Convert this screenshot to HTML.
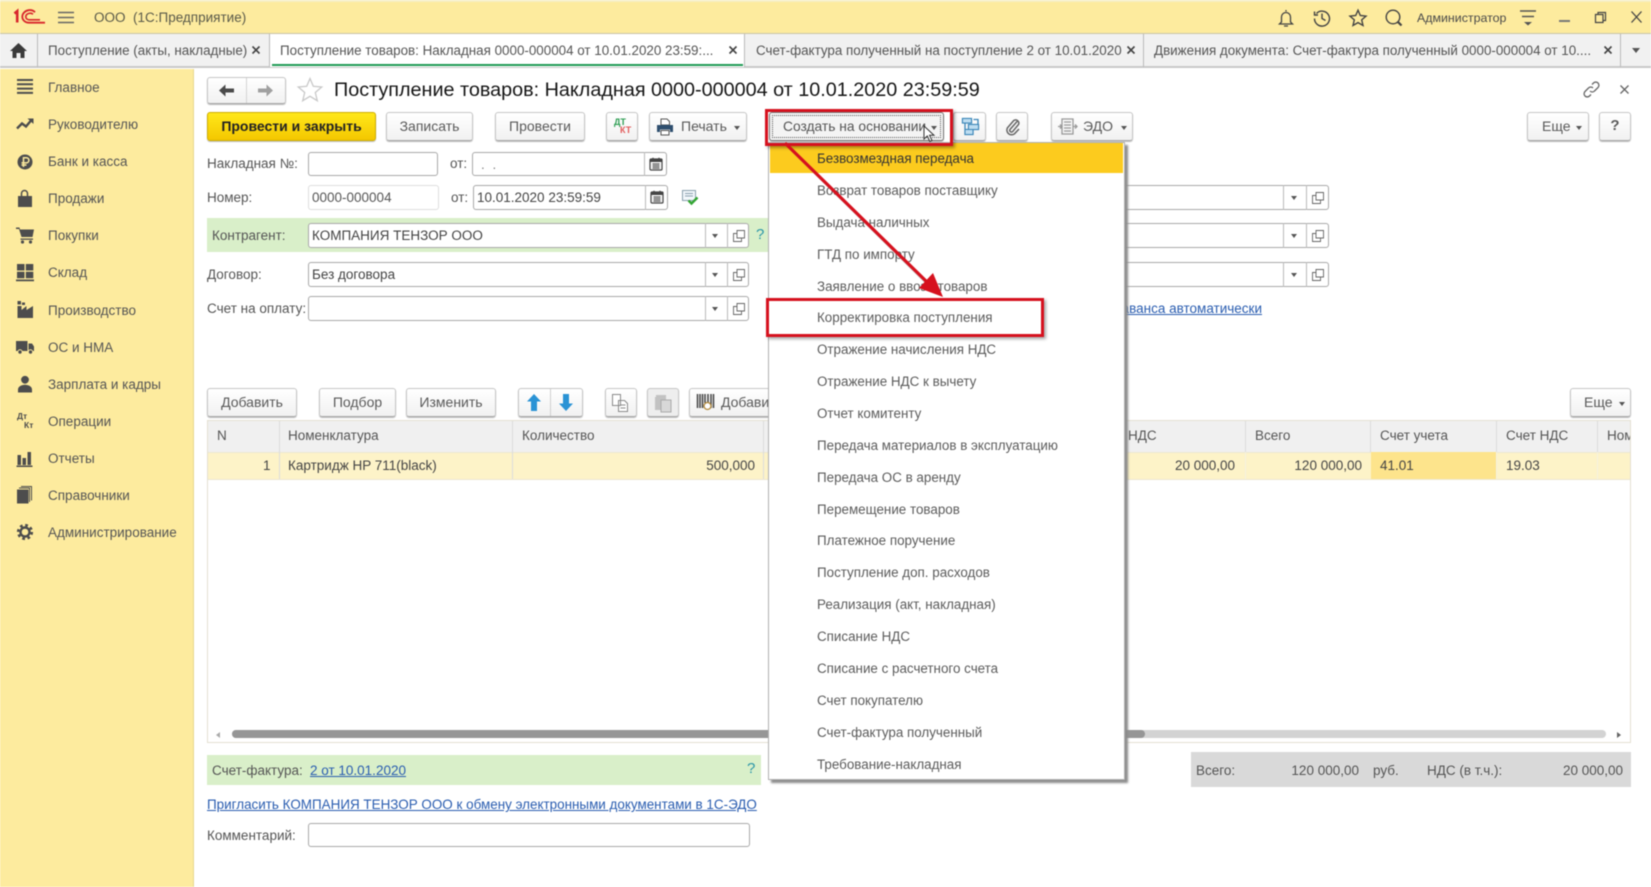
<!DOCTYPE html>
<html lang="ru"><head><meta charset="utf-8"><title>1С</title>
<style>
*{box-sizing:border-box}
html,body{margin:0;padding:0;background:#fff}
#r{position:relative;width:1651px;height:887px;overflow:hidden;font-family:"Liberation Sans",Arial,sans-serif;font-size:13.5px;color:#555;background:#fff;filter:blur(.45px)}
.a{position:absolute}
.t{position:absolute;white-space:nowrap;line-height:20px;height:20px;margin-top:1px}
.b{position:absolute;top:112px;height:29px;border:1px solid #c6c6c6;border-bottom:1px solid #a8a8a8;border-radius:3px;background:linear-gradient(#fff,#f1f1f1);box-shadow:0 1px 1px #bbb;text-align:center;line-height:26px;color:#5a5a5a;white-space:nowrap}
.i{position:absolute;background:#fff;border:1px solid #a9a9a9;border-radius:3px;height:25px;line-height:23px;padding-left:3px;color:#444}
.d{position:absolute;width:1px;background:#bbb}
.c{position:absolute;width:0;height:0;border-left:3.5px solid transparent;border-right:3.5px solid transparent;border-top:4px solid #555}
.m{position:absolute;left:817px;white-space:nowrap;line-height:20px;height:20px;color:#5c5c5c;font-size:13.4px;margin-top:1px}
.h{position:absolute;top:421px;height:31px;background:#f0f0f0}
.v{position:absolute;width:1px;background:#dcdcdc}
a,.l{color:#2a5db0;text-decoration:underline}
svg{position:absolute;overflow:visible}
</style></head><body><div id="r">
<svg width="0" height="0"><defs>
<symbol id="pop" viewBox="0 0 14 14" overflow="visible"><path d="M5 1.500h7.500v7.500h-7.500z M5 4.500h-3.500v8h8v-3.500" fill="none" stroke="#666" stroke-width=".9"/></symbol>
<symbol id="cal" viewBox="0 0 14 14" overflow="visible"><rect x="1" y="2" width="12" height="11" rx="1" fill="#fff" stroke="#444" stroke-width="1.2"/><rect x="1" y="2" width="12" height="3" fill="#444"/><path d="M4 .8v2.500M10 .8v2.500" stroke="#444" stroke-width="1.300"/><path d="M3 7h8M3 9h8M3 11h8M5 6v6M7 6v6M9 6v6" stroke="#555" stroke-width=".8"/></symbol>
</defs></svg>

<!-- header -->
<div class="a" style="left:0;top:0;width:1651px;height:33px;background:#fdeb9e"></div>
<div class="a" style="left:0;top:0;width:1651px;height:2px;background:#f6efc4"></div>
<svg style="left:13px;top:9px" width="33" height="16" viewBox="0 0 33 16"><path d="M1.500 4.500L4.200 2.200V13.500" fill="none" stroke="#d8262c" stroke-width="2.600"/><path d="M22 3.200C20.500 1.600 18 .8 15.500 1.200 12 1.800 9.300 4.500 9.300 7.800c0 3.300 3 5.900 6.600 5.900H32" fill="none" stroke="#d8262c" stroke-width="1.800"/><path d="M20 5.200C19 4.400 17.500 4 16 4.400 14 4.900 12.800 6.200 12.800 7.800c0 1.700 1.500 3 3.400 3H27" fill="none" stroke="#d8262c" stroke-width="1.600"/></svg>
<svg style="left:58px;top:11px" width="16" height="13"><path d="M0 1.500h16M0 6.500h16M0 11.500h16" stroke="#666" stroke-width="1.500"/></svg>
<div class="t" style="left:94px;top:7px;color:#5a5a4a;font-size:13.5px">ООО&nbsp; (1С:Предприятие)</div>
<svg style="left:1277px;top:9px" width="18" height="18" fill="none" stroke="#444" stroke-width="1.300"><path d="M9 1v1.500M4.500 13V8a4.500 4.500 0 0 1 9 0v5l2 2H2.500z M7 17h4"/></svg>
<svg style="left:1313px;top:9px" width="18" height="18" fill="none" stroke="#444" stroke-width="1.400"><path d="M3.500 4.500A7.500 7.500 0 1 1 1.500 9.500M1.500 2.500v3.500h3.500M9 4.500v5l3.500 2"/></svg>
<svg style="left:1349px;top:9px" width="18" height="18" fill="none" stroke="#444" stroke-width="1.400"><path d="M9 1.200 11.300 6.500 17 7.100 12.700 10.900 14 16.500 9 13.600 4 16.500 5.300 10.900 1 7.100 6.700 6.500z"/></svg>
<svg style="left:1385px;top:9px" width="18" height="18" fill="none" stroke="#444"><circle cx="8" cy="8" r="6.800" stroke-width="1.400"/><path d="M12.800 12.800 16.500 16.500" stroke-width="2.200"/></svg>
<div class="t" style="left:1417px;top:7px;font-size:12.4px;color:#4a4a4a">Администратор</div>
<svg style="left:1520px;top:10px" width="16" height="16"><path d="M0 1h16M2 6.500h12" stroke="#555" stroke-width="1.500"/><path d="M4 12h8l-4 3.500z" fill="#555"/></svg>
<div class="a" style="left:1559px;top:20px;width:11px;height:2px;background:#777"></div>
<svg style="left:1595px;top:12px" width="11" height="11" fill="none" stroke="#444" stroke-width="1.200"><path d="M.5 2.500h7.500v8h-7.500zM3 2.500V.5h7.500v8H8"/></svg>
<svg style="left:1631px;top:11px" width="11" height="12"><path d="M.5 .5 10.500 11.500M10.500 .5.500 11.500" stroke="#444" stroke-width="1.300"/></svg>

<!-- tabs -->
<div class="a" style="left:0;top:33px;width:1651px;height:35px;background:#f1f1f1;border-top:1px solid #c9c4a8;border-bottom:2px solid #c9c9c9"></div>
<svg style="left:10px;top:43px" width="17" height="15"><path d="M8.500 0 17 8h-2.500v7H10.500v-5h-4v5H2.500V8H0z" fill="#3a3a3a"/></svg>
<div class="d" style="left:37px;top:34px;height:33px"></div>
<div class="t" style="left:48px;top:40px;font-size:13.4px">Поступление (акты, накладные)</div>
<svg style="left:252px;top:46px" width="8" height="8"><path d="M.5 .5 7.500 7.500M7.500 .5.500 7.500" stroke="#444" stroke-width="1.600"/></svg>
<div class="a" style="left:269px;top:34px;width:476px;height:33px;background:#fff;border-left:1px solid #bbb;border-right:1px solid #bbb"></div>
<div class="a" style="left:272px;top:64px;width:471px;height:2px;background:#1f9a55"></div>
<div class="t" style="left:280px;top:40px;font-size:13.4px">Поступление товаров: Накладная 0000-000004 от 10.01.2020 23:59:...</div>
<svg style="left:729px;top:46px" width="8" height="8"><path d="M.5 .5 7.500 7.500M7.500 .5.500 7.500" stroke="#444" stroke-width="1.600"/></svg>
<div class="t" style="left:756px;top:40px;font-size:13.4px">Счет-фактура полученный на поступление 2 от 10.01.2020</div>
<svg style="left:1127px;top:46px" width="8" height="8"><path d="M.5 .5 7.500 7.500M7.500 .5.500 7.500" stroke="#444" stroke-width="1.600"/></svg>
<div class="d" style="left:1143px;top:34px;height:33px"></div>
<div class="t" style="left:1154px;top:40px;font-size:13.4px">Движения документа: Счет-фактура полученный 0000-000004 от 10....</div>
<svg style="left:1604px;top:46px" width="8" height="8"><path d="M.5 .5 7.500 7.500M7.500 .5.500 7.500" stroke="#444" stroke-width="1.600"/></svg>
<div class="d" style="left:1620px;top:34px;height:33px"></div>
<div class="c" style="left:1632px;top:48px;border-left-width:4.500px;border-right-width:4.500px;border-top-width:5px"></div>

<!-- sidebar -->
<div class="a" style="left:0;top:69px;width:194px;height:818px;background:#fdeb9e;border-right:1px solid #e8d98e"></div>
<div class="t" style="left:48px;top:77px">Главное</div>
<div class="t" style="left:48px;top:114px">Руководителю</div>
<div class="t" style="left:48px;top:151px">Банк и касса</div>
<div class="t" style="left:48px;top:188px">Продажи</div>
<div class="t" style="left:48px;top:225px">Покупки</div>
<div class="t" style="left:48px;top:262px">Склад</div>
<div class="t" style="left:48px;top:300px">Производство</div>
<div class="t" style="left:48px;top:337px">ОС и НМА</div>
<div class="t" style="left:48px;top:374px">Зарплата и кадры</div>
<div class="t" style="left:48px;top:411px">Операции</div>
<div class="t" style="left:48px;top:448px">Отчеты</div>
<div class="t" style="left:48px;top:485px">Справочники</div>
<div class="t" style="left:48px;top:522px">Администрирование</div>
<svg style="left:17px;top:79px" width="16" height="16" fill="#4d4d4d"><path d="M0 0h16v2H0zM0 4.300h16v2H0zM0 8.600h16v2H0zM0 12.900h16v2H0z"/></svg>
<svg style="left:16px;top:115px" width="18" height="18"><path d="M1 13.500 6 8.500 10 11.500 15 5.500" fill="none" stroke="#4d4d4d" stroke-width="2.400"/><path d="M11.500 3.500h6v5.500z" fill="#4d4d4d"/></svg>
<svg style="left:17px;top:154px" width="16" height="16"><circle cx="8" cy="8" r="7.500" fill="#4d4d4d"/><path d="M6.500 13V3.700h2.800a2.600 2.600 0 0 1 0 5.200H4.500M4.500 11h5" fill="none" stroke="#fdeb9e" stroke-width="1.500"/></svg>
<svg style="left:17px;top:190px" width="16" height="18"><path d="M1 6h14v11H1z" fill="#4d4d4d"/><path d="M4.500 8V3.500a3 3 0 0 1 6 0V8" fill="none" stroke="#4d4d4d" stroke-width="1.500"/></svg>
<svg style="left:16px;top:226px" width="18" height="18" fill="#4d4d4d"><path d="M0 1.500h3.500l.5 2h14l-1.500 7.500H5.500L3 3H0z"/><path d="M4.500 12.500h12.500v1.300H4.500z"/><circle cx="6.500" cy="16" r="1.600"/><circle cx="14.500" cy="16" r="1.600"/></svg>
<svg style="left:16px;top:264px" width="18" height="18" fill="#4d4d4d"><path d="M1 0h7.500v6.500H1zM9.800 0h7.500v6.500H9.800zM1 7.800h7.500v6.500H1zM9.800 7.800h7.500v6.500H9.800zM0 15.500h18v1.800H0z"/></svg>
<svg style="left:16px;top:301px" width="18" height="18" fill="#4d4d4d"><path d="M1.500 0H5v3.500H1.500zM6 1.500h3v2.500H6z"/><path d="M1.500 5h4v4l5-4v4l6.500-4v12H1.500z"/></svg>
<svg style="left:16px;top:338px" width="18" height="18" fill="#4d4d4d"><path d="M0 3h11.500v10H0z"/><path d="M12.500 5.500h3.500l2 3v4.500h-5.500z"/><circle cx="4" cy="14" r="2.200" stroke="#fdeb9e"/><circle cx="14.500" cy="14" r="2.200" stroke="#fdeb9e"/></svg>
<svg style="left:17px;top:375px" width="16" height="18" fill="#4d4d4d"><circle cx="8" cy="4.800" r="3.900"/><path d="M1 17.500v-3c0-3 3.500-4.800 7-4.800s7 1.800 7 4.800v3z"/></svg>
<div class="t" style="left:17px;top:410px;font-size:8.500px;font-weight:bold;line-height:10px;color:#4d4d4d">Дт</div>
<div class="t" style="left:24px;top:419px;font-size:8.500px;font-weight:bold;line-height:10px;color:#4d4d4d">Кт</div>
<svg style="left:16px;top:450px" width="18" height="18" fill="#4d4d4d"><path d="M1.500 5h3.500v10H1.500zM6.500 8h3.500v7H6.500zM11.500 2h3.500v13h-3.500zM.5 15.500h16v1.500H.5z"/></svg>
<svg style="left:16px;top:486px" width="18" height="18" fill="#4d4d4d"><path d="M1 3.500h11.500v14H1z"/><path d="M3 2h10.500v14M5 .5h10.500v14" fill="none" stroke="#4d4d4d" stroke-width="1"/></svg>
<svg style="left:16px;top:523px" width="18" height="18" fill="none" stroke="#4d4d4d"><circle cx="9" cy="9" r="4.500" stroke-width="2.400"/><circle cx="9" cy="9" r="6.800" stroke-width="2.600" stroke-dasharray="2.700 2.640"/></svg>

<!-- title row -->
<div class="b" style="left:207px;top:77px;width:79px;height:27px"></div>
<div class="d" style="left:246px;top:78px;height:25px;background:#d4d4d4"></div>
<svg style="left:219px;top:84px" width="15" height="13"><path d="M0 6.500 6.500 0.500V4.500H15V8.500H6.500V12.500z" fill="#4a4a4a"/></svg>
<svg style="left:258px;top:84px" width="15" height="13"><path d="M15 6.500 8.500 0.500V4.500H0V8.500H8.500V12.500z" fill="#a0a0a0"/></svg>
<svg style="left:297px;top:77px" width="26" height="25"><path d="M13 1.500 16.300 9.300 24.700 10 18.300 15.500 20.300 23.700 13 19.300 5.700 23.700 7.700 15.500 1.300 10 9.700 9.300z" fill="#fff" stroke="#c9c9c9" stroke-width="1.300"/></svg>
<div class="t" style="left:334px;top:80px;margin-top:0;font-size:19.8px;color:#151515">Поступление товаров: Накладная 0000-000004 от 10.01.2020 23:59:59</div>
<svg style="left:1583px;top:81px" width="17" height="17" fill="none" stroke="#666" stroke-width="1.300"><path d="M7 10a3 3 0 0 0 4.500 0l3.500-3.500a3 3 0 0 0-4.500-4.500L9 3.500M10 7a3 3 0 0 0-4.500 0L2 10.500a3 3 0 0 0 4.500 4.500L8 13.500"/></svg>
<svg style="left:1620px;top:85px" width="9" height="9"><path d="M.5 .5 8.500 8.500M8.500 .5.500 8.500" stroke="#666" stroke-width="1.300"/></svg>

<!-- toolbar -->
<div class="b" style="left:207px;width:169px;background:linear-gradient(#ffe81a,#f4c700);border-color:#cfae00;color:#222;font-weight:bold;font-size:14px">Провести и закрыть</div>
<div class="b" style="left:386px;width:87px;font-size:14px">Записать</div>
<div class="b" style="left:495px;width:90px;font-size:14px">Провести</div>
<div class="b" style="left:606px;width:32px"></div>
<div class="t" style="left:614px;top:116px;font-size:9px;font-weight:bold;line-height:10px;color:#2f9e54">ДТ</div>
<div class="t" style="left:620px;top:124px;font-size:9px;font-weight:bold;line-height:10px;color:#e25a5a">КТ</div>
<div class="b" style="left:649px;width:98px;text-align:left;padding-left:31px;font-size:14px">Печать</div>
<svg style="left:657px;top:119px" width="16" height="16"><path d="M4 0h6l2.500 2.500V6H4z" fill="#fff" stroke="#555"/><path d="M0 6h16v7h-3v-2.500H3V13H0z" fill="#2f4f6f"/><path d="M4 11.500h8V16H4z" fill="#fff" stroke="#555"/></svg>
<div class="c" style="left:734px;top:126px"></div>
<div class="b" style="left:769px;width:175px;text-align:left;padding-left:13px;background:#f4f4f4;border-color:#777;color:#555;font-size:13.8px;line-height:27px">Создать на основании</div>
<div class="a" style="left:772px;top:115px;width:169px;height:23px;border:1px dotted #555"></div>
<div class="c" style="left:931px;top:126px"></div>
<div class="b" style="left:953px;width:33px"></div>
<svg style="left:962px;top:118px" width="17" height="17" fill="none" stroke="#3b86b8" stroke-width="1.300"><path d="M.5 .5h9v4.500h-9zM6.500 6.500h10v5h-10zM3 11.500h8v5H3zM11.500 1.500H16V6M3 5.500V11"/><path d="M1 1h8v3.500H1zM7 7h9v4H7zM3.500 12h7v4h-7z" fill="#bcdcf0" stroke="none"/></svg>
<div class="b" style="left:996px;width:32px"></div>
<svg style="left:1005px;top:118px" width="15" height="17" fill="none" stroke="#666" stroke-width="1.500"><path d="M12.500 3 5 11.500a1.700 1.700 0 0 0 2.500 2.200L13.500 6.500a3.200 3.200 0 0 0-4.700-4L2.500 9.800a4.700 4.700 0 0 0 7 6L14 11"/></svg>
<div class="b" style="left:1051px;width:82px;text-align:left;padding-left:31px;font-size:14px">ЭДО</div>
<svg style="left:1058px;top:118px" width="19" height="17" fill="none" stroke="#999" stroke-width="1.300"><path d="M4 1h11v15H4zM6 4h7M6 7h7M6 10h7M6 13h7M0 8.500h4M15 8.500h4M2 6.500 4 8.500 2 10.500M17 6.500 19 8.500 17 10.500"/></svg>
<div class="c" style="left:1121px;top:126px"></div>
<div class="b" style="left:1527px;width:62px;text-align:left;padding-left:14px;font-size:14px">Еще</div>
<div class="c" style="left:1576px;top:126px"></div>
<div class="b" style="left:1599px;width:32px;font-weight:bold;font-size:15px">?</div>

<!-- form -->
<div class="t" style="left:207px;top:153px">Накладная №:</div>
<div class="i" style="left:308px;top:152px;width:130px;height:24px"></div>
<div class="t" style="left:450px;top:153px">от:</div>
<div class="i" style="left:472px;top:152px;width:195px;height:24px;padding-left:8px;letter-spacing:2px;color:#888">. .</div>
<div class="d" style="left:644px;top:152px;height:24px"></div>
<svg style="left:649px;top:157px" width="14" height="14"><use href="#cal"/></svg>
<div class="t" style="left:207px;top:187px">Номер:</div>
<div class="i" style="left:308px;top:185px;width:131px;border-color:#dedede;color:#555">0000-000004</div>
<div class="t" style="left:451px;top:187px">от:</div>
<div class="i" style="left:473px;top:185px;width:195px">10.01.2020 23:59:59</div>
<div class="d" style="left:645px;top:185px;height:25px"></div>
<svg style="left:650px;top:190px" width="14" height="14"><use href="#cal"/></svg>
<svg style="left:682px;top:190px" width="17" height="15"><path d="M.5 .5h13v10H.5z" fill="#f2f7fb" stroke="#8aa0ae"/><path d="M3 3.500h8M3 6h8" stroke="#8aa0ae"/><path d="M6.500 10.500 9.500 13.500 15.500 7.500" fill="none" stroke="#33a533" stroke-width="2.400"/></svg>

<div class="a" style="left:207px;top:218px;width:561px;height:34px;background:#d9efc9"></div>
<div class="t" style="left:212px;top:225px">Контрагент:</div>
<div class="i" style="left:308px;top:223px;width:441px">КОМПАНИЯ ТЕНЗОР ООО</div>
<div class="d" style="left:705px;top:223px;height:25px"></div><div class="d" style="left:727px;top:223px;height:25px"></div>
<div class="c" style="left:712px;top:234px"></div>
<svg style="left:732px;top:229px" width="14" height="14"><use href="#pop"/></svg>
<div class="t" style="left:756px;top:224px;color:#2b96a8;font-size:15px">?</div>

<div class="t" style="left:207px;top:264px">Договор:</div>
<div class="i" style="left:308px;top:262px;width:441px">Без договора</div>
<div class="d" style="left:705px;top:262px;height:25px"></div><div class="d" style="left:727px;top:262px;height:25px"></div>
<div class="c" style="left:712px;top:273px"></div>
<svg style="left:732px;top:268px" width="14" height="14"><use href="#pop"/></svg>

<div class="t" style="left:207px;top:298px">Счет на оплату:</div>
<div class="i" style="left:308px;top:296px;width:441px"></div>
<div class="d" style="left:705px;top:296px;height:25px"></div><div class="d" style="left:727px;top:296px;height:25px"></div>
<div class="c" style="left:712px;top:307px"></div>
<svg style="left:732px;top:302px" width="14" height="14"><use href="#pop"/></svg>

<!-- right inputs -->
<div class="i" style="left:1000px;top:185px;width:329px"></div>
<div class="d" style="left:1283px;top:185px;height:25px"></div><div class="d" style="left:1306px;top:185px;height:25px"></div>
<div class="c" style="left:1291px;top:196px"></div>
<svg style="left:1311px;top:191px" width="14" height="14"><use href="#pop"/></svg>
<div class="i" style="left:1000px;top:223px;width:329px"></div>
<div class="d" style="left:1283px;top:223px;height:25px"></div><div class="d" style="left:1306px;top:223px;height:25px"></div>
<div class="c" style="left:1291px;top:234px"></div>
<svg style="left:1311px;top:229px" width="14" height="14"><use href="#pop"/></svg>
<div class="i" style="left:1000px;top:262px;width:329px"></div>
<div class="d" style="left:1283px;top:262px;height:25px"></div><div class="d" style="left:1306px;top:262px;height:25px"></div>
<div class="c" style="left:1291px;top:273px"></div>
<svg style="left:1311px;top:268px" width="14" height="14"><use href="#pop"/></svg>
<div class="t l" style="right:389px;top:298px">аванса автоматически</div>

<!-- table toolbar -->
<div class="b" style="left:207px;top:388px;width:90px;font-size:14px">Добавить</div>
<div class="b" style="left:319px;top:388px;width:77px;font-size:14px">Подбор</div>
<div class="b" style="left:406px;top:388px;width:90px;font-size:14px">Изменить</div>
<div class="b" style="left:518px;top:388px;width:65px"></div>
<div class="d" style="left:550px;top:389px;height:27px;background:#d0d0d0"></div>
<svg style="left:527px;top:394px" width="14" height="17"><path d="M7 0 14 7.500H10V17H4V7.500H0z" fill="#2a93d5"/></svg>
<svg style="left:559px;top:394px" width="14" height="17"><path d="M7 17 14 9.500H10V0H4V9.500H0z" fill="#2a93d5"/></svg>
<div class="b" style="left:605px;top:388px;width:32px"></div>
<svg style="left:612px;top:394px" width="18" height="18" fill="#fff" stroke="#8a8a8a"><path d="M.5 .5h8v11h-8zM6.500 6.500h6l3 3v8h-9z"/><path d="M8.500 11h5M8.500 14h5" fill="none"/></svg>
<div class="b" style="left:647px;top:388px;width:32px;background:#eee"></div>
<svg style="left:655px;top:394px" width="17" height="18" fill="#c2c2c2"><path d="M1 1h10v3h-10z"/><path d="M0 3h11v13H0z"/><path d="M6 6h10v12H6z" fill="#d8d8d8" stroke="#aaa"/></svg>
<div class="b" style="left:689px;top:388px;width:90px;text-align:left;padding-left:31px;font-size:14px">Добавить</div>
<svg style="left:697px;top:394px" width="18" height="18"><path d="M.5 0v14M3 0v14M5.500 0v14M8 0v9M11 0v8M14 0v14M16.500 0v14" stroke="#444" stroke-width="1.500"/><circle cx="10.500" cy="12" r="3.500" fill="#fff" stroke="#b28a3c" stroke-width="1.300"/></svg>
<div class="b" style="left:1570px;top:388px;width:61px;text-align:left;padding-left:13px;font-size:14px">Еще</div>
<div class="c" style="left:1619px;top:402px"></div>

<!-- table -->
<div class="a" style="left:207px;top:420px;width:1424px;height:323px;background:#fff;border:1px solid #e4e0d2"></div>
<div class="h" style="left:208px;width:1422px"></div>
<div class="a" style="left:208px;top:452px;width:1422px;height:28px;background:#fdf3c8;border-bottom:1px solid #ece7d2;border-top:1px solid #ece7d2"></div>
<div class="a" style="left:1371px;top:452px;width:125px;height:27px;background:#fde48c"></div>
<div class="v" style="left:279px;top:421px;height:58px"></div>
<div class="v" style="left:512px;top:421px;height:58px"></div>
<div class="v" style="left:763px;top:421px;height:58px"></div>
<div class="v" style="left:1245px;top:421px;height:31px"></div>
<div class="v" style="left:1370px;top:421px;height:31px"></div>
<div class="v" style="left:1496px;top:421px;height:31px"></div>
<div class="v" style="left:1597px;top:421px;height:31px"></div>
<div class="v" style="left:1245px;top:452px;height:27px;background:#f5f1e0"></div>
<div class="v" style="left:1496px;top:452px;height:27px;background:#f5f1e0"></div>
<div class="v" style="left:1597px;top:452px;height:27px;background:#f5f1e0"></div>
<div class="t" style="left:217px;top:425px">N</div>
<div class="t" style="left:288px;top:425px">Номенклатура</div>
<div class="t" style="left:522px;top:425px">Количество</div>
<div class="t" style="left:1128px;top:425px">НДС</div>
<div class="t" style="left:1255px;top:425px">Всего</div>
<div class="t" style="left:1380px;top:425px">Счет учета</div>
<div class="t" style="left:1506px;top:425px">Счет НДС</div>
<div class="a" style="left:1607px;top:426px;width:23px;height:20px;overflow:hidden;line-height:20px;white-space:nowrap">Номенклатура</div>
<div class="t" style="left:263px;top:455px;color:#444">1</div>
<div class="t" style="left:288px;top:455px;color:#444">Картридж HP 711(black)</div>
<div class="t" style="right:896px;top:455px;color:#444">500,000</div>
<div class="t" style="right:416px;top:455px;color:#444">20 000,00</div>
<div class="t" style="right:289px;top:455px;color:#444">120 000,00</div>
<div class="t" style="left:1380px;top:455px;color:#444">41.01</div>
<div class="t" style="left:1506px;top:455px;color:#444">19.03</div>
<!-- scrollbar -->
<div class="a" style="left:232px;top:730px;width:1374px;height:8px;border-radius:4px;background:#d3d3d3"></div>
<div class="a" style="left:232px;top:730px;width:913px;height:8px;border-radius:4px;background:#969696"></div>
<div class="a" style="left:216px;top:732px;width:0;height:0;border-right:4px solid #aaa;border-top:3px solid transparent;border-bottom:3px solid transparent"></div>
<div class="a" style="left:1617px;top:732px;width:0;height:0;border-left:4px solid #666;border-top:3px solid transparent;border-bottom:3px solid transparent"></div>

<!-- bottom -->
<div class="a" style="left:207px;top:755px;width:554px;height:30px;background:#d9efc9"></div>
<div class="t" style="left:212px;top:760px">Счет-фактура:</div>
<div class="t l" style="left:310px;top:760px">2 от 10.01.2020</div>
<div class="t" style="left:747px;top:758px;color:#2b96a8;font-size:15px">?</div>
<div class="t l" style="left:207px;top:795px;margin-top:0;font-size:13.45px">Пригласить КОМПАНИЯ ТЕНЗОР ООО к обмену электронными документами в 1С-ЭДО</div>
<div class="t" style="left:207px;top:825px">Комментарий:</div>
<div class="i" style="left:308px;top:823px;width:442px;height:24px"></div>
<div class="a" style="left:1191px;top:752px;width:440px;height:35px;background:#d9d9d9"></div>
<div class="t" style="left:1196px;top:760px">Всего:</div>
<div class="t" style="right:292px;top:760px">120 000,00</div>
<div class="t" style="left:1373px;top:760px">руб.</div>
<div class="t" style="left:1427px;top:760px">НДС (в т.ч.):</div>
<div class="t" style="right:28px;top:760px">20 000,00</div>

<!-- menu -->
<div class="a" style="left:768px;top:142px;width:357px;height:638px;background:#fff;border:1px solid #b0b0b0;box-shadow:3px 3px 2px #8c8c8c"></div>
<div class="a" style="left:770px;top:143px;width:353px;height:30px;background:#fccb1e"></div>
<div class="m" style="top:148px;color:#333">Безвозмездная передача</div>
<div class="m" style="top:180px">Возврат товаров поставщику</div>
<div class="m" style="top:212px">Выдача наличных</div>
<div class="m" style="top:244px">ГТД по импорту</div>
<div class="m" style="top:276px">Заявление о ввозе товаров</div>
<div class="m" style="top:307px">Корректировка поступления</div>
<div class="m" style="top:339px">Отражение начисления НДС</div>
<div class="m" style="top:371px">Отражение НДС к вычету</div>
<div class="m" style="top:403px">Отчет комитенту</div>
<div class="m" style="top:435px">Передача материалов в эксплуатацию</div>
<div class="m" style="top:467px">Передача ОС в аренду</div>
<div class="m" style="top:499px">Перемещение товаров</div>
<div class="m" style="top:530px">Платежное поручение</div>
<div class="m" style="top:562px">Поступление доп. расходов</div>
<div class="m" style="top:594px">Реализация (акт, накладная)</div>
<div class="m" style="top:626px">Списание НДС</div>
<div class="m" style="top:658px">Списание с расчетного счета</div>
<div class="m" style="top:690px">Счет покупателю</div>
<div class="m" style="top:722px">Счет-фактура полученный</div>
<div class="m" style="top:754px">Требование-накладная</div>

<!-- annotations -->
<div class="a" style="left:765px;top:109px;width:188px;height:37px;border:3px solid #d6111e;box-shadow:2px 2px 3px rgba(0,0,0,.35)"></div>
<div class="a" style="left:766px;top:298px;width:278px;height:39px;border:3px solid #d6111e;box-shadow:2px 2px 3px rgba(0,0,0,.35)"></div>
<svg style="left:0;top:0" width="1651" height="887"><path d="M788 146 931 287" stroke="#888" stroke-width="3" opacity=".5"/><path d="M785 143 928 283" stroke="#d6111e" stroke-width="3.200"/><path d="M943 297 919 288 933 273z" fill="#d6111e"/></svg>
<svg style="left:923px;top:125px" width="13" height="18"><path d="M1 1V14L4.300 11 6.800 16.500 9 15.500 6.600 10.300H11z" fill="#fff" stroke="#333" stroke-width="1"/></svg>
</div></body></html>
